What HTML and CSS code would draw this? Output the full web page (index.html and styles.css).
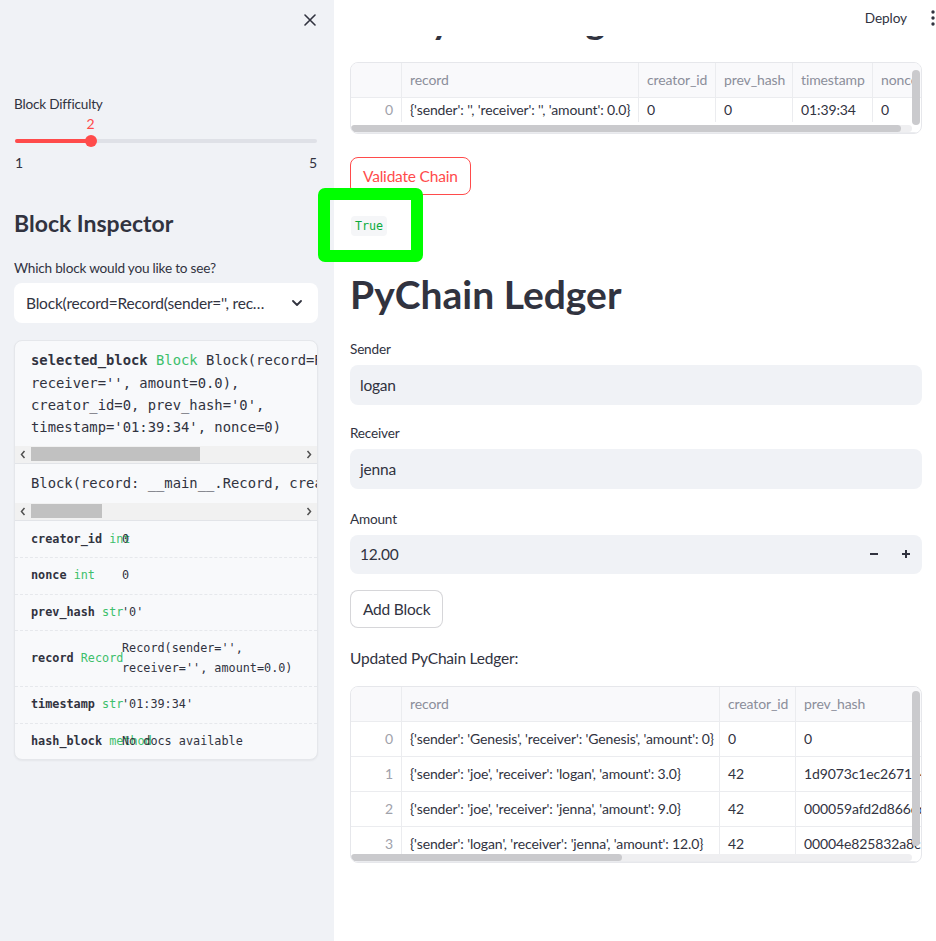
FILE: index.html
```html
<!DOCTYPE html>
<html>
<head>
<meta charset="utf-8">
<title>PyChain</title>
<link rel="stylesheet" href="styles.css">
</head>
<body>
<div class="app">
  <aside class="sidebar">
    <div class="sb-top">
      <svg class="close" viewBox="0 0 12 12" width="12" height="12"><path d="M1 1L11 11M11 1L1 11" stroke="#31333f" stroke-width="1.6" stroke-linecap="round"/></svg>
    </div>
    <div class="label sb-label1">Block Difficulty</div>
    <div class="slider">
      <div class="slider-val-row"><span class="slider-val" style="margin-left:25%">2</span></div>
      <div class="slider-track-wrap">
        <div class="slider-track"><div class="slider-fill" style="width:25%"></div></div>
        <div class="slider-thumb" style="left:25%"></div>
      </div>
      <div class="slider-ticks"><span>1</span><span>5</span></div>
    </div>
    <h2 class="sb-title">Block Inspector</h2>
    <div class="label sb-label2">Which block would you like to see?</div>
    <div class="select">
      <span class="select-text">Block(record=Record(sender='', rec…</span>
      <svg class="chev" viewBox="0 0 10 6" width="10" height="6"><path d="M1 1L5 5L9 1" fill="none" stroke="#31333f" stroke-width="1.8" stroke-linecap="round" stroke-linejoin="round"/></svg>
    </div>
    <div class="help">
      <div class="help-pre help-pre1"><b>selected_block</b> <span class="htype">Block</span> Block(record=Record(sender='',
receiver='', amount=0.0),
creator_id=0, prev_hash='0',
timestamp='01:39:34', nonce=0)</div>
      <div class="fscroll">
        <span class="farrow"><svg viewBox="0 0 6 9" width="6" height="9"><path d="M4.5 1L1.5 4.5L4.5 8" fill="none" stroke="#505050" stroke-width="1.5"/></svg></span>
        <span class="ftrack"><span class="fthumb" style="width:169px"></span></span>
        <span class="farrow"><svg viewBox="0 0 6 9" width="6" height="9"><path d="M1.5 1L4.5 4.5L1.5 8" fill="none" stroke="#505050" stroke-width="1.5"/></svg></span>
      </div>
      <div class="help-pre help-pre2">Block(record: __main__.Record, creator_id: int, prev_hash: str = '0', timestamp: str = '01:39:34', nonce: int = 0)</div>
      <div class="fscroll">
        <span class="farrow"><svg viewBox="0 0 6 9" width="6" height="9"><path d="M4.5 1L1.5 4.5L4.5 8" fill="none" stroke="#505050" stroke-width="1.5"/></svg></span>
        <span class="ftrack"><span class="fthumb" style="width:71px"></span></span>
        <span class="farrow"><svg viewBox="0 0 6 9" width="6" height="9"><path d="M1.5 1L4.5 4.5L1.5 8" fill="none" stroke="#505050" stroke-width="1.5"/></svg></span>
      </div>
      <div class="hrows">
        <div class="hrow"><span class="hname"><b>creator_id</b> <span class="htype">int</span></span><span class="hval">0</span></div>
        <div class="hrow"><span class="hname"><b>nonce</b> <span class="htype">int</span></span><span class="hval">0</span></div>
        <div class="hrow"><span class="hname"><b>prev_hash</b> <span class="htype">str</span></span><span class="hval">'0'</span></div>
        <div class="hrow"><span class="hname"><b>record</b> <span class="htype">Record</span></span><span class="hval">Record(sender='',<br>receiver='', amount=0.0)</span></div>
        <div class="hrow"><span class="hname"><b>timestamp</b> <span class="htype">str</span></span><span class="hval">'01:39:34'</span></div>
        <div class="hrow"><span class="hname"><b>hash_block</b> <span class="htype">method</span></span><span class="hval">No docs available</span></div>
      </div>
    </div>
  </aside>

  <main class="main">
    <header class="topbar">
      <span class="deploy">Deploy</span>
      <svg class="kebab" viewBox="0 0 4 16" width="4" height="16"><circle cx="2" cy="2" r="1.7" fill="#31333f"/><circle cx="2" cy="8" r="1.7" fill="#31333f"/><circle cx="2" cy="14" r="1.7" fill="#31333f"/></svg>
    </header>

    <h2 class="cut-title">Verify the Ledger</h2>

    <div class="df df1">
      <div class="df-row df-head"><div class="c"></div><div class="c">record</div><div class="c">creator_id</div><div class="c">prev_hash</div><div class="c">timestamp</div><div class="c">nonce</div></div>
      <div class="df-row df-body1"><div class="c idx">0</div><div class="c">{'sender': '', 'receiver': '', 'amount': 0.0}</div><div class="c">0</div><div class="c">0</div><div class="c">01:39:34</div><div class="c">0</div></div>
      <div class="vthumb vthumb1"></div>
      <div class="hbar hbar1"><div class="hthumb" style="width:550px"></div></div>
    </div>

    <button class="btn btn-red">Validate Chain</button>

    <div class="true-row"><code class="code">True</code></div>

    <h1 class="title">PyChain Ledger</h1>

    <div class="field-label fl-sender">Sender</div>
    <div class="input">logan</div>

    <div class="field-label fl-next">Receiver</div>
    <div class="input">jenna</div>

    <div class="field-label fl-amount">Amount</div>
    <div class="input input-num">
      <span class="num-val">12.00</span>
      <span class="step"><svg viewBox="0 0 10 10" width="10" height="10"><path d="M1 5H9" stroke="#31333f" stroke-width="2"/></svg></span>
      <span class="step"><svg viewBox="0 0 10 10" width="10" height="10"><path d="M1 5H9M5 1V9" stroke="#31333f" stroke-width="2"/></svg></span>
    </div>

    <button class="btn btn-add">Add Block</button>

    <p class="updated">Updated PyChain Ledger:</p>

    <div class="df df2">
      <div class="df-row df-head"><div class="c"></div><div class="c">record</div><div class="c">creator_id</div><div class="c">prev_hash</div></div>
      <div class="df-row"><div class="c idx">0</div><div class="c">{'sender': 'Genesis', 'receiver': 'Genesis', 'amount': 0}</div><div class="c">0</div><div class="c">0</div></div>
      <div class="df-row"><div class="c idx">1</div><div class="c">{'sender': 'joe', 'receiver': 'logan', 'amount': 3.0}</div><div class="c">42</div><div class="c">1d9073c1ec2671349a</div></div>
      <div class="df-row"><div class="c idx">2</div><div class="c">{'sender': 'joe', 'receiver': 'jenna', 'amount': 9.0}</div><div class="c">42</div><div class="c">000059afd2d866dd4c</div></div>
      <div class="df-row"><div class="c idx">3</div><div class="c">{'sender': 'logan', 'receiver': 'jenna', 'amount': 12.0}</div><div class="c">42</div><div class="c">00004e825832a8c81b</div></div>
      <div class="vthumb vthumb2"></div>
      <div class="hbar hbar2"><div class="hthumb" style="width:271px"></div></div>
    </div>
  </main>

  <div class="highlight"></div>
</div>
</body>
</html>
```

FILE: styles.css
```css
* { box-sizing: border-box; margin: 0; padding: 0; }
html, body { width: 936px; height: 941px; overflow: hidden; }
body {
  font-family: Lato, "Noto Sans", sans-serif;
  color: #31333f;
  background: #ffffff;
}
.app { display: flex; height: 941px; position: relative; }

/* ---------- sidebar ---------- */
.sidebar {
  width: 334px;
  flex: none;
  background: #f0f2f6;
  padding: 0 16px 0 14px;
  display: flex;
  flex-direction: column;
}
.sb-top { height: 40px; display: flex; justify-content: flex-end; align-items: center; }
.close { margin-right: 2px; }
.label { font-size: 13.6px; letter-spacing: -0.2px; line-height: 20px; }
.sb-label1 { margin-top: 54px; }

.slider { display: flex; flex-direction: column; padding: 0 1px; }
.slider-val-row { display: flex; height: 14px; margin-top: 3px; line-height: 14px; font-size: 14px; color: #ff4b4b; }
.slider-val { transform: translateX(-50%); }
.slider-track-wrap { position: relative; height: 12px; margin-top: 4px; display: flex; align-items: center; }
.slider-track { flex: 1; height: 4px; border-radius: 2px; background: #dfe1e7; overflow: hidden; }
.slider-fill { height: 100%; background: #ff4b4b; }
.slider-thumb { position: absolute; top: 0; width: 12px; height: 12px; margin-left: -6px; border-radius: 50%; background: #ff4b4b; }
.slider-ticks { display: flex; justify-content: space-between; font-size: 14px; line-height: 14px; margin-top: 9px; }

.sb-title { font-size: 23px; font-weight: 700; line-height: 27.6px; margin-top: 40px; }
.sb-label2 { margin-top: 20px; }

.select {
  margin-top: 5px;
  height: 40px;
  background: #ffffff;
  border-radius: 8px;
  display: flex;
  align-items: center;
  justify-content: space-between;
  padding: 0 16px 0 12px;
  font-size: 15.5px;
  letter-spacing: -0.2px;
}
.select-text { white-space: nowrap; overflow: hidden; }

.help {
  margin-top: 17px;
  background: #f8f9fb;
  border: 1px solid #e5e7eb;
  border-radius: 8px;
  overflow: hidden;
  box-shadow: 0 1px 2px rgba(0,0,0,0.05);
}
.help-pre {
  font-family: "DejaVu Sans Mono", monospace;
  font-size: 13.85px;
  line-height: 22.4px;
  white-space: pre;
  overflow: hidden;
  padding-left: 16px;
}
.help-pre1 { padding-top: 8.5px; padding-bottom: 7px; }
.help-pre2 { padding-top: 8px; padding-bottom: 8.5px; border-top: 1px solid #e2e4e8; }
.help-pre b { font-weight: 700; }
.htype { color: #3dbf6b; }

.fscroll { height: 17px; background: #f1f1f1; display: flex; align-items: center; }
.farrow { width: 16px; height: 17px; display: flex; align-items: center; justify-content: center; flex: none; }
.ftrack { flex: 1; height: 17px; display: flex; align-items: center; }
.fthumb { height: 14px; background: #c1c1c1; display: block; }

.hrows { border-top: 1px solid #e2e4e8; }
.hrow {
  display: grid;
  grid-template-columns: 91px 1fr;
  align-items: center;
  padding: 8px 16px;
  font-family: "DejaVu Sans Mono", monospace;
  font-size: 11.8px;
  line-height: 19.5px;
  border-top: 1px dashed #e6e8ec;
}
.hrow:first-child { border-top: none; padding-top: 9px; }
.hname { white-space: nowrap; }
.hname b { font-weight: 700; }
.hval { position: relative; }

/* ---------- main ---------- */
.main {
  flex: 1;
  position: relative;
  padding: 0 14px 0 16px;
  display: flex;
  flex-direction: column;
  overflow: hidden;
}
.topbar {
  position: absolute;
  top: 0; left: 0; right: 0;
  height: 36px;
  background: #ffffff;
  display: flex;
  justify-content: flex-end;
  align-items: center;
  font-size: 13.6px;
  letter-spacing: -0.1px;
  z-index: 2;
}
.deploy { margin-right: 24px; }
.kebab { margin-right: 1px; }

.cut-title { font-size: 38px; font-weight: 700; line-height: 45.6px; margin-top: -3px; white-space: nowrap; }

.df {
  position: relative;
  border: 1px solid #e6e7eb;
  border-radius: 8px;
  overflow: hidden;
  font-size: 14px;
  letter-spacing: -0.12px;
  background: #fff;
}
.df1 { margin-top: 19px; }
.df2 { margin-top: 16px; }
.df-row {
  display: grid;
  height: 35px;
  border-bottom: 1px solid #ebecef;
}
.df-row:last-of-type { border-bottom: none; }
.df1 .df-row { grid-template-columns: 51px 237px 77px 77px 80px 80px; }
.df2 .df-row { grid-template-columns: 51px 318px 76px 220px; }
.df-row .c {
  padding: 0 8px;
  display: flex;
  align-items: center;
  border-right: 1px solid #ebecef;
  white-space: nowrap;
  overflow: hidden;
}
.df-head { color: #8b8e9a; background: #f9f9fb; }
.df-body1 { padding-bottom: 10px; }
.c.idx { justify-content: flex-end; color: #a0a2ab; }

.vthumb { position: absolute; right: 1px; width: 8px; border-radius: 4px; background: #cacacd; }
.vthumb1 { top: 7px; height: 55px; }
.vthumb2 { top: 4px; height: 155px; }
.hbar { position: absolute; left: 0; right: 9px; bottom: 1px; height: 7px; border-radius: 4px; background: #efeff1; }
.hthumb { height: 100%; border-radius: 4px; background: #cacacd; }

.btn {
  align-self: flex-start;
  height: 38px;
  padding: 0 12px;
  border-radius: 8px;
  font-family: Lato, "Noto Sans", sans-serif;
  font-size: 15.5px;
  letter-spacing: -0.2px;
  background: #ffffff;
  color: #31333f;
  border: 1px solid rgba(49,51,63,0.2);
}
.btn-red { margin-top: 23px; border-color: #ff4b4b; color: #ff4b4b; }
.btn-add { margin-top: 16px; }

.true-row { margin-top: 21.5px; height: 20px; display: flex; align-items: center; }
.code {
  font-family: "DejaVu Sans Mono", monospace;
  font-size: 11.7px;
  line-height: 16px;
  color: #09ab3b;
  background: #f5f6f8;
  padding: 2px 4px;
  border-radius: 4px;
  margin-left: 1px;
}

.title { font-size: 39px; font-weight: 700; line-height: 46.8px; margin-top: 35px; }

.field-label { font-size: 13.6px; letter-spacing: -0.2px; line-height: 20px; }
.fl-sender { margin-top: 21px; }
.fl-next { margin-top: 18px; }
.fl-amount { margin-top: 20px; }
.input {
  margin-top: 6px;
  height: 40px;
  background: #f0f2f6;
  border-radius: 8px;
  display: flex;
  align-items: center;
  padding: 0 10px;
  font-size: 15.5px;
  letter-spacing: -0.2px;
}
.input-num { height: 39px; padding-right: 0; }
.num-val { flex: 1; }
.step { width: 32px; height: 39px; display: flex; align-items: center; justify-content: center; }

.updated { margin-top: 18px; font-size: 15.5px; letter-spacing: -0.2px; line-height: 24px; }

.highlight {
  position: absolute;
  left: 318px;
  top: 188px;
  width: 105px;
  height: 74px;
  border: 12px solid #00ff00;
  border-radius: 7px;
  z-index: 5;
}
```
